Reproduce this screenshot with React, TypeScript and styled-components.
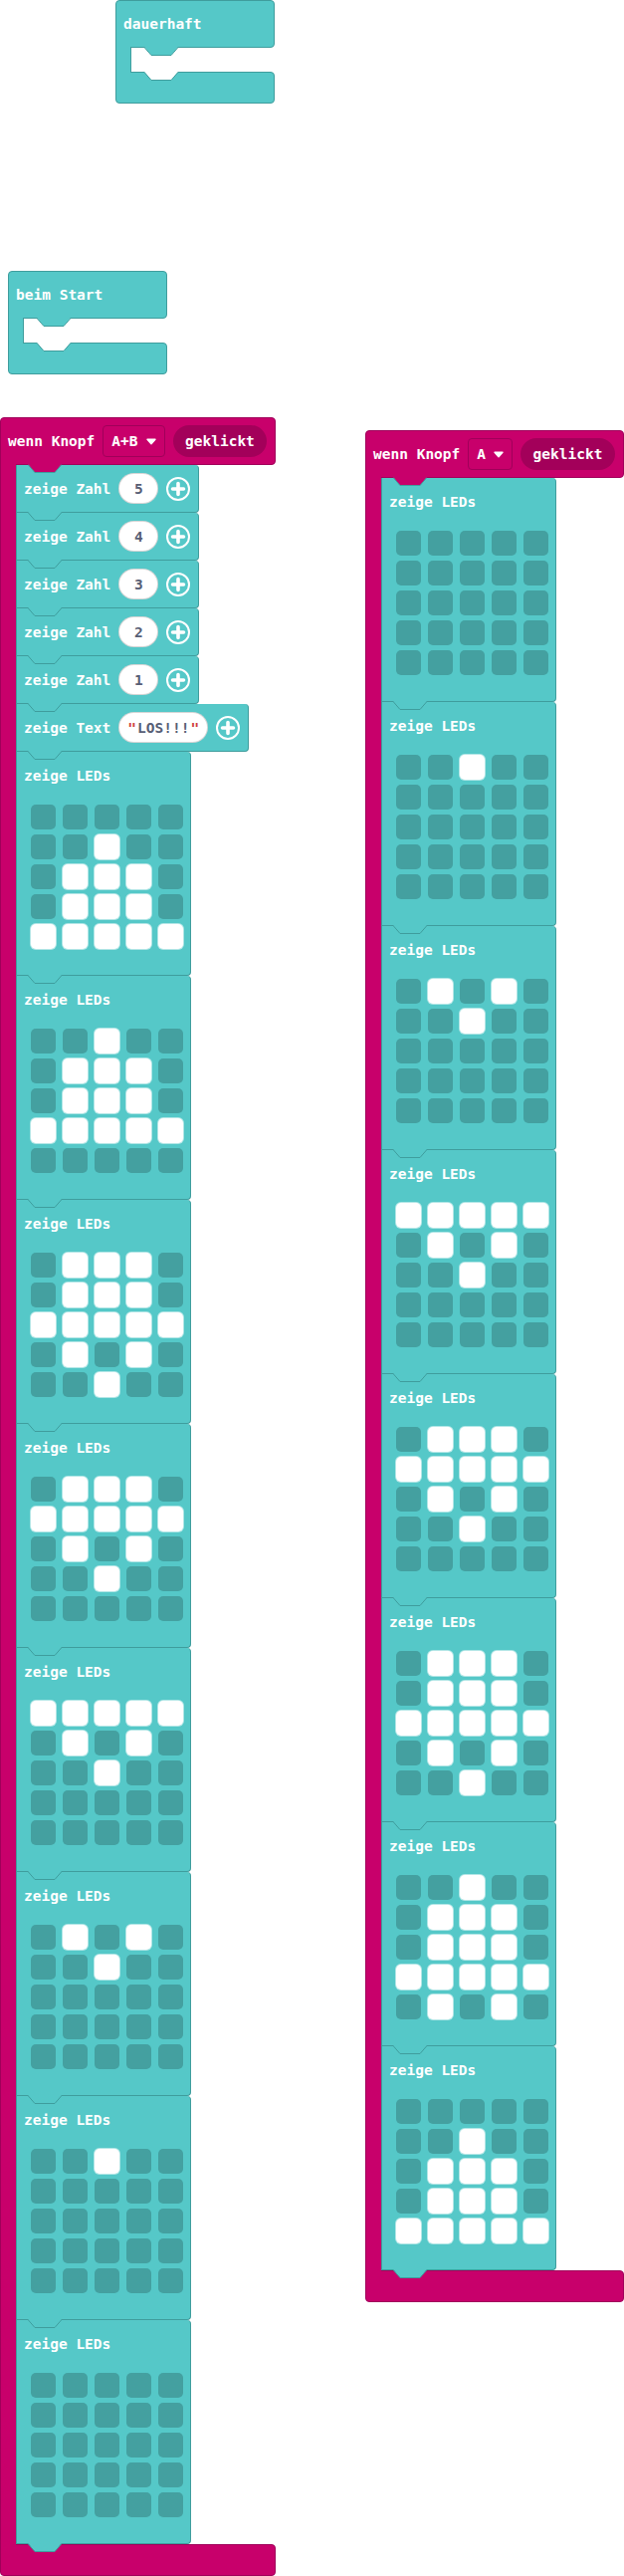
import React from 'react';
import styled, { createGlobalStyle } from 'styled-components';

const TEAL = '#55c8c8';
const TEAL_LINE = '#3f9d9d';
const LED_OFF = '#44a0a0';
const MAGENTA = '#c8006b';
const MAGENTA_LINE = '#a0005a';
const MAGENTA_DARK = '#a3005a';

type Kind = 'teal' | 'magenta';
const fillOf = (k: Kind) => (k === 'teal' ? TEAL : MAGENTA);
const lineOf = (k: Kind) => (k === 'teal' ? TEAL_LINE : MAGENTA_LINE);

const GlobalStyle = createGlobalStyle`
  html, body {
    margin: 0;
    padding: 0;
    background: #fff;
  }
  body {
    font-family: 'DejaVu Sans Mono', 'Liberation Mono', monospace;
  }
`;

const Workspace = styled.div`
  position: relative;
  width: 627px;
  height: 2587px;
  overflow: hidden;
  background: #fff;
`;

type PlacedProps = {
  readonly $left: number;
  readonly $top: number;
  readonly $width?: number;
};
// blocks sit on a free canvas, their spot is part of the content
const Placed = styled.div<PlacedProps>`
  position: absolute;
  left: ${(p) => p.$left}px;
  top: ${(p) => p.$top}px;
  width: ${(p) => (p.$width ? `${p.$width}px` : 'auto')};
  display: flex;
  flex-direction: column;
`;

type BarProps = {
  readonly $kind: Kind;
  readonly $h: number;
  readonly $pos: 'top' | 'bottom';
};
const Bar = styled.div<BarProps>`
  position: relative;
  box-sizing: border-box;
  height: ${(p) => p.$h}px;
  flex: none;
  display: flex;
  align-items: center;
  gap: 8px;
  padding: 0 8px 0 7px;
  background: ${(p) => fillOf(p.$kind)};
  border: 1px solid ${(p) => lineOf(p.$kind)};
  border-radius: ${(p) => (p.$pos === 'top' ? '4px 4px 4px 0' : '0 4px 4px 4px')};
`;

const Label = styled.span`
  color: #fff;
  font-weight: 700;
  font-size: 14.5px;
  white-space: pre;
`;

const Body = styled.div`
  display: flex;
  align-items: stretch;
`;

type ArmProps = {
  readonly $kind: Kind;
  readonly $open?: boolean;
};
const Arm = styled.div<ArmProps>`
  position: relative;
  z-index: 1;
  box-sizing: border-box;
  width: 16px;
  flex: none;
  margin: -1px 0;
  background: ${(p) => fillOf(p.$kind)};
  border-left: 1px solid ${(p) => lineOf(p.$kind)};
  border-right: ${(p) => (p.$open ? `1px solid ${lineOf(p.$kind)}` : 'none')};
`;

const Slot = styled.div`
  height: 24px;
  flex: 1;
`;

const Stack = styled.div`
  display: flex;
  flex-direction: column;
  align-items: flex-start;
`;

type StatementProps = {
  readonly $h: number;
  readonly $w?: number;
};
const Statement = styled.div<StatementProps>`
  position: relative;
  box-sizing: border-box;
  height: ${(p) => p.$h}px;
  width: ${(p) => (p.$w ? `${p.$w}px` : 'auto')};
  background: ${TEAL};
  border: 1px solid ${TEAL_LINE};
  border-top: none;
  border-radius: 0 4px 4px 0;
`;

const InlineRow = styled.div`
  display: flex;
  align-items: center;
  gap: 8px;
  height: 100%;
  padding: 0 8px 0 7px;
`;

const Field = styled.span`
  box-sizing: border-box;
  height: 31px;
  border-radius: 16px;
  background: #fff;
  border: 1px solid rgba(0, 0, 0, 0.16);
  display: flex;
  align-items: center;
  justify-content: center;
  color: #575e75;
  font-weight: 700;
  font-size: 14.5px;
  white-space: pre;
`;

const NumberField = styled(Field)`
  width: 40px;
`;

const StringField = styled(Field)`
  padding: 0 8px;
  gap: 1px;
`;

const Quote = styled.span`
  color: #d0433f;
`;

const Dropdown = styled.span`
  box-sizing: border-box;
  height: 32px;
  display: flex;
  align-items: center;
  gap: 8px;
  padding: 0 8px;
  border: 1px solid ${MAGENTA_LINE};
  border-radius: 4px;
  color: #fff;
  font-weight: 700;
  font-size: 14.5px;
`;

const Pill = styled.span`
  box-sizing: border-box;
  height: 32px;
  display: flex;
  align-items: center;
  padding: 0 12.5px;
  border-radius: 16px;
  background: ${MAGENTA_DARK};
  color: #fff;
  font-weight: 700;
  font-size: 14.5px;
`;

const LedHead = styled.div`
  height: 48px;
  display: flex;
  align-items: center;
  padding-left: 7px;
`;

const LedGrid = styled.div`
  display: grid;
  grid-template-columns: repeat(5, 25px);
  grid-auto-rows: 25px;
  column-gap: 7px;
  row-gap: 5px;
  margin: 5px 0 0 14px;
`;

type LedProps = {
  readonly $on: boolean;
};
const Led = styled.div<LedProps>`
  border-radius: 5px;
  background: ${(p) => (p.$on ? '#fff' : LED_OFF)};
  box-shadow: ${(p) => (p.$on ? '0 0 0 1px rgba(255,255,255,0.55)' : 'none')};
`;

type TabSvgProps = {
  readonly $left: number;
  readonly $atTop?: boolean;
};
const TabSvg = styled.svg<TabSvgProps>`
  position: absolute;
  z-index: 3;
  display: block;
  left: ${(p) => p.$left}px;
  top: ${(p) => (p.$atTop ? '-1px' : '100%')};
`;

type TabProps = {
  fill: string;
  line: string;
  left: number;
  atTop?: boolean;
};
const Tab = ({ fill, line, left, atTop }: TabProps) => (
  <TabSvg $left={left} $atTop={atTop} width="34" height="10" viewBox="0 0 34 10">
    <polygon points="0,0 34,0 27,8.5 7,8.5" fill={fill} />
    <polyline
      points="0,0.5 7,8.5 27,8.5 34,0.5"
      fill="none"
      stroke={line}
      strokeWidth="1"
    />
  </TabSvg>
);

const PlusIcon = () => (
  <svg width="24" height="24" viewBox="0 0 24 24">
    <circle cx="12" cy="12" r="11" fill="none" stroke="#fff" strokeWidth="2" />
    <path
      d="M12 6.5v11M6.5 12h11"
      stroke="#fff"
      strokeWidth="3.6"
      strokeLinecap="round"
    />
  </svg>
);

const ArrowDown = () => (
  <svg width="10" height="7" viewBox="0 0 10 7">
    <path
      d="M1 1.2h8L5 5.8z"
      fill="#fff"
      stroke="#fff"
      strokeWidth="1.4"
      strokeLinejoin="round"
    />
  </svg>
);

const ShowNumber = ({ value }: { value: string }) => (
  <Statement $h={48}>
    <InlineRow>
      <Label>zeige Zahl</Label>
      <NumberField>{value}</NumberField>
      <PlusIcon />
    </InlineRow>
    <Tab fill={TEAL} line={TEAL_LINE} left={11} />
  </Statement>
);

const ShowText = ({ value }: { value: string }) => (
  <Statement $h={48}>
    <InlineRow>
      <Label>zeige Text</Label>
      <StringField>
        <Quote>"</Quote>
        {value}
        <Quote>"</Quote>
      </StringField>
      <PlusIcon />
    </InlineRow>
    <Tab fill={TEAL} line={TEAL_LINE} left={11} />
  </Statement>
);

const ShowLeds = ({ rows }: { rows: string[] }) => (
  <Statement $h={225} $w={176}>
    <LedHead>
      <Label>zeige LEDs</Label>
    </LedHead>
    <LedGrid>
      {rows.map((row, r) =>
        row.split('').map((c, i) => <Led key={`${r}-${i}`} $on={c === '#'} />)
      )}
    </LedGrid>
    <Tab fill={TEAL} line={TEAL_LINE} left={11} />
  </Statement>
);

const LoopBlock = ({ title, left, top }: { title: string; left: number; top: number }) => (
  <Placed $left={left} $top={top} $width={160}>
    <Bar $kind="teal" $h={48} $pos="top">
      <Label>{title}</Label>
      <Tab fill={TEAL} line={TEAL_LINE} left={28} />
    </Bar>
    <Body>
      <Arm $kind="teal" $open />
      <Slot />
    </Body>
    <Bar $kind="teal" $h={32} $pos="bottom">
      <Tab fill="#fff" line={TEAL_LINE} left={28} atTop />
    </Bar>
  </Placed>
);

type ButtonEventProps = {
  button: string;
  left: number;
  top: number;
  children: React.ReactNode;
};
const ButtonEvent = ({ button, left, top, children }: ButtonEventProps) => (
  <Placed $left={left} $top={top}>
    <Bar $kind="magenta" $h={48} $pos="top">
      <Label>wenn Knopf</Label>
      <Dropdown>
        {button}
        <ArrowDown />
      </Dropdown>
      <Pill>geklickt</Pill>
      <Tab fill={MAGENTA} line={TEAL_LINE} left={27} />
    </Bar>
    <Body>
      <Arm $kind="magenta" />
      <Stack>{children}</Stack>
    </Body>
    <Bar $kind="magenta" $h={32} $pos="bottom" />
  </Placed>
);

const E = '.....';

const launchFrames = [
  [E, '..#..', '.###.', '.###.', '#####'],
  ['..#..', '.###.', '.###.', '#####', E],
  ['.###.', '.###.', '#####', '.#.#.', '..#..'],
  ['.###.', '#####', '.#.#.', '..#..', E],
  ['#####', '.#.#.', '..#..', E, E],
  ['.#.#.', '..#..', E, E, E],
  ['..#..', E, E, E, E],
  [E, E, E, E, E],
];

const landingFrames = [
  [E, E, E, E, E],
  ['..#..', E, E, E, E],
  ['.#.#.', '..#..', E, E, E],
  ['#####', '.#.#.', '..#..', E, E],
  ['.###.', '#####', '.#.#.', '..#..', E],
  ['.###.', '.###.', '#####', '.#.#.', '..#..'],
  ['..#..', '.###.', '.###.', '#####', '.#.#.'],
  [E, '..#..', '.###.', '.###.', '#####'],
];

const App = () => {
  return (
    <>
      <GlobalStyle />
      <Workspace>
        <LoopBlock title="dauerhaft" left={116} top={0} />
        <LoopBlock title="beim Start" left={8} top={272} />

        <ButtonEvent button="A+B" left={0} top={419}>
          {['5', '4', '3', '2', '1'].map((n) => (
            <ShowNumber key={n} value={n} />
          ))}
          <ShowText value="LOS!!!" />
          {launchFrames.map((rows, i) => (
            <ShowLeds key={i} rows={rows} />
          ))}
        </ButtonEvent>

        <ButtonEvent button="A" left={367} top={432}>
          {landingFrames.map((rows, i) => (
            <ShowLeds key={i} rows={rows} />
          ))}
        </ButtonEvent>
      </Workspace>
    </>
  );
};

export default App;
